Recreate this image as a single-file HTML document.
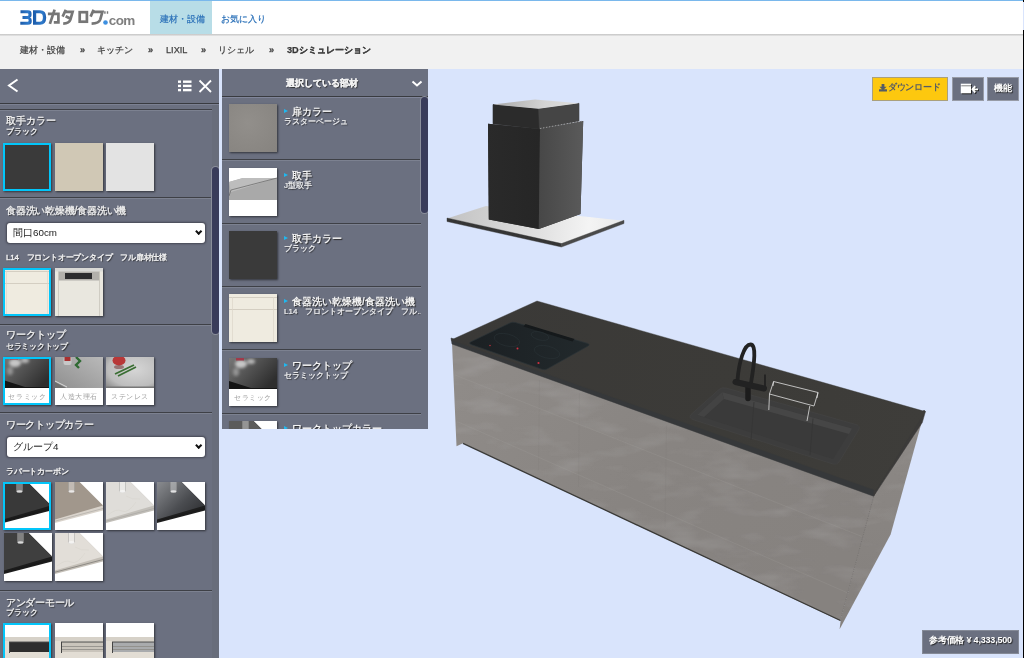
<!DOCTYPE html>
<html><head><meta charset="utf-8">
<style>
*{box-sizing:border-box;margin:0;padding:0}
html,body{width:1024px;height:658px;overflow:hidden}
#wrap{position:absolute;left:0;top:0;width:1024px;height:658px;will-change:transform}
body{position:relative;background:#d9e4fc;font-family:"Liberation Sans",sans-serif;color:#333}
.abs{position:absolute}
#topline{left:0;top:0;width:1023px;height:1px;background:#7ab8ec}
#header{left:0;top:1px;width:1023px;height:33px;background:#fff}
#hshadow{left:0;top:34px;width:1023px;height:2px;background:linear-gradient(#c4c4c4,#e6e6e6)}
#crumb{left:0;top:35px;width:1023px;height:34px;background:#f1f1f1}
.crumb{position:absolute;top:45px;font-size:9.2px;line-height:11px;color:#444;white-space:nowrap;-webkit-text-stroke:0.25px #444}
#rline{left:1023px;top:30px;width:1px;height:628px;background:#000}
#rline2{left:1023px;top:0;width:1px;height:2px;background:#000}
#tab{left:150px;top:1px;width:62px;height:33px;background:#b8dde7}
.nav{position:absolute;top:13.5px;font-size:8.5px;line-height:11px;color:#2a70b8;white-space:nowrap;-webkit-text-stroke:0.2px #2a70b8}
#lp{left:0;top:69px;width:219px;height:589px;background:#6b7080;overflow:hidden}
#lph{left:0;top:0;width:219px;height:35px;border-bottom:1px solid #393b40;box-shadow:0 1px 0 #7c8192}
#mp{left:222px;top:69px;width:206px;height:360px;background:#6b7080;overflow:hidden}
.sep{position:absolute;height:2px;background:linear-gradient(#3e4046 50%,#7c8190 50%)}
.t1{position:absolute;font-size:10px;line-height:12px;color:#f2f2f2;white-space:nowrap;text-shadow:1px 1px 1px #2a2a2a;-webkit-text-stroke:0.3px #f2f2f2}
.t2{position:absolute;font-size:8px;line-height:10px;color:#f2f2f2;white-space:nowrap;font-weight:bold;text-shadow:1px 1px 1px #2a2a2a}
.sw{position:absolute;width:48px;height:48px;box-shadow:1px 1px 2px rgba(0,0,0,.55);overflow:hidden}
.sel{box-shadow:0 0 0 0 transparent,1px 1px 2px rgba(0,0,0,.55)}
.sel:after{content:"";position:absolute;left:0;top:0;right:0;bottom:0;border:2.7px solid #02c6fa}
.select{position:absolute;left:7px;width:198px;height:19.5px;background:#fff;border-radius:3px;font-size:9.8px;line-height:19.5px;color:#222;padding-left:6px;box-shadow:0 0 2px 0.5px rgba(40,40,50,.55)}
.select:after{content:"";position:absolute;right:4px;top:5.5px;width:3.4px;height:3.4px;border-right:2.3px solid #111;border-bottom:2.3px solid #111;transform:rotate(45deg)}
.lbl{position:absolute;left:0;bottom:0;width:100%;height:17px;background:#fff;font-size:7.4px;line-height:17px;color:#a0a0a0;text-align:center;letter-spacing:0.6px;white-space:nowrap;overflow:hidden}
.scroll{position:absolute;width:7px;background:#393c5a;border-radius:4px;box-shadow:0 0 0 1px #8a8e9a}
.mi-t{position:absolute;left:70px;font-size:10px;line-height:12px;color:#f4f4f4;font-weight:bold;white-space:nowrap;text-shadow:1px 1px 1px #2a2a2a}
.mi-s{position:absolute;left:62px;width:137px;overflow:hidden;font-size:8px;line-height:10px;color:#f4f4f4;white-space:nowrap;text-shadow:1px 1px 1px #2a2a2a;-webkit-text-stroke:0.2px #f4f4f4}
.tri{position:absolute;left:62px;width:0;height:0;border-left:4px solid #1fb8f0;border-top:2.5px solid transparent;border-bottom:2.5px solid transparent}
.btn{position:absolute;top:77px;height:24px;font-size:10px;line-height:22px;text-align:center;white-space:nowrap;border:1px solid #9a9a9a}
</style></head><body><div id="wrap">
<div class="abs" id="topline"></div>
<div class="abs" id="header"></div>
<div class="abs" id="crumb"></div>
<div class="abs" id="hshadow"></div>
<div class="abs" id="tab"></div>
<div class="nav" style="left:160px">建材・設備</div>
<div class="nav" style="left:221px">お気に入り</div>
<svg class="abs" style="left:0;top:0" width="150" height="34" viewBox="0 0 150 34">
<defs><linearGradient id="lg3" x1="0" y1="0" x2="1" y2="0"><stop offset="0" stop-color="#1b5aa8"/><stop offset="0.7" stop-color="#2f7bcc"/><stop offset="1" stop-color="#1d5eae"/></linearGradient></defs>
<path d="M20.5,10.3 H28 Q31.5,10.3 31.5,13.5 V15.2 Q31.5,17.2 30,17.6 Q31.7,18 31.7,20.3 V21.5 Q31.7,24.7 28,24.7 H20.3 V21.8 H27.6 Q28.6,21.8 28.6,20.8 V20.2 Q28.6,19.1 27.6,19.1 H22.5 V16.1 H27.4 Q28.4,16.1 28.4,15.1 V14.3 Q28.4,13.2 27.4,13.2 H20.5 Z" fill="url(#lg3)"/>
<path d="M33,10.3 H40 Q46.2,10.3 46.2,17.5 Q46.2,24.7 40,24.7 H33 Z M36.2,13.3 V21.7 H39.6 Q42.9,21.7 42.9,17.5 Q42.9,13.3 39.6,13.3 Z" fill="url(#lg3)" fill-rule="evenodd"/>
<g fill="none" stroke="#767676" stroke-width="2.7" stroke-linejoin="miter">
<path d="M47.9,13.9 H58.4 V22.4 H53.8"/><path d="M54.6,9.7 L49.9,23.9"/>
<path d="M65.8,9.7 L62.6,16.6"/><path d="M64.3,11.9 H72.6 L70.4,19.6 Q69.2,23.3 63.2,23.6"/><path d="M65.6,16.2 L70.6,18.8"/>
<rect x="79.7" y="12.2" width="7.2" height="9.5"/>
<path d="M93.6,9.7 L90.6,16.6"/><path d="M92.2,11.9 H102.4 L100.2,19.6 Q99,23.3 91.6,23.6"/>
<path d="M104.9,11.2 V13.8 M107.5,11.2 V13.8" stroke-width="1.4"/>
</g>
<circle cx="105.5" cy="22.5" r="2.3" fill="#3d8fe0"/>
<text x="108.8" y="24.7" font-size="13.5" fill="#7f7f7f" font-weight="bold" letter-spacing="-0.6" style="font-family:'Liberation Sans',sans-serif">com</text>
</svg>
<div class="crumb" style="left:20px">建材・設備</div>
<div class="crumb" style="left:80px;font-weight:bold">»</div>
<div class="crumb" style="left:97px">キッチン</div>
<div class="crumb" style="left:148px;font-weight:bold">»</div>
<div class="crumb" style="left:166px">LIXIL</div>
<div class="crumb" style="left:201px;font-weight:bold">»</div>
<div class="crumb" style="left:218px">リシェル</div>
<div class="crumb" style="left:269px;font-weight:bold">»</div>
<div class="crumb" style="left:287px;font-weight:bold;color:#333">3Dシミュレーション</div>
<svg width="0" height="0" style="position:absolute"><defs><linearGradient id="s4g" x1="0" y1="0" x2="1" y2="0.8"><stop offset="0" stop-color="#8a8c90"/><stop offset="0.6" stop-color="#4a4c50"/><stop offset="1" stop-color="#2e2f32"/></linearGradient></defs></svg>
<div class="abs" id="lp">
<div class="abs" id="lph"></div>
<svg class="abs" style="left:0;top:0" width="219" height="34">
    <polyline points="17.5,10.5 9,16.5 17.5,22.5" fill="none" stroke="#fff" stroke-width="2"/>
    <rect x="178" y="11.5" width="3" height="2.4" fill="#fff"/><rect x="183" y="11.5" width="8.5" height="2.4" fill="#fff"/>
    <rect x="178" y="15.7" width="3" height="2.4" fill="#fff"/><rect x="183" y="15.7" width="8.5" height="2.4" fill="#fff"/>
    <rect x="178" y="19.9" width="3" height="2.4" fill="#fff"/><rect x="183" y="19.9" width="8.5" height="2.4" fill="#fff"/>
    <path d="M199.5,11.5 L211,23 M211,11.5 L199.5,23" stroke="#fff" stroke-width="1.8"/>
  </svg>
<div class="sep" style="left:0;top:40px;width:212px"></div>
<div class="t1" style="left:6px;top:46px;">取手カラー</div>
<div class="t2" style="left:6px;top:58px;">ブラック</div>
<div class="sw sel" style="left:3.4px;top:74px;background:#3a3a3a"></div>
<div class="sw" style="left:55px;top:74px;background:#d0c8b5"></div>
<div class="sw" style="left:106px;top:74px;background:#e3e3e3"></div>
<div class="sep" style="left:0;top:128px;width:212px"></div>
<div class="t1" style="left:6px;top:136px;letter-spacing:-0.2px">食器洗い乾燥機/食器洗い機</div>
<div class="select" style="top:154px">間口60cm</div>
<div class="t2" style="left:6px;top:184px;font-weight:normal;letter-spacing:-0.2px;-webkit-text-stroke:0.35px #f2f2f2">L14　フロントオープンタイプ　フル扉材仕様</div>
<div class="sw sel" style="left:3.4px;top:199px;background:#fff"><svg width="48" height="48" style="display:block"><rect width="48" height="48" fill="#efebe0"/><path d="M0,3.5 H48 M0,15.5 H48" stroke="#c9c2b5" stroke-width="0.7"/><path d="M3.5,3 V48 M44.5,3 V48" stroke="#ddd6c8" stroke-width="0.7"/></svg></div>
<div class="sw" style="left:55px;top:199px;background:#fff"><svg width="48" height="48" style="display:block"><rect width="48" height="48" fill="#e9e7df"/><rect width="48" height="3.5" fill="#d9d9d6"/><rect x="3.5" y="3.5" width="41" height="9" fill="#b2b0ab"/><rect x="10" y="5" width="27" height="6" fill="#2c2c2e"/><path d="M3.5,3.5 V48 M44.5,3.5 V48" stroke="#c8c5bb" stroke-width="0.8"/></svg></div>
<div class="sep" style="left:0;top:255px;width:212px"></div>
<div class="t1" style="left:6px;top:259.5px;">ワークトップ</div>
<div class="t2" style="left:6px;top:272.5px;letter-spacing:-0.3px">セラミックトップ</div>
<div class="sw sel" style="left:3.4px;top:288px;background:#fff"><svg width="48" height="31" viewBox="0 0 48 31" style="display:block"><defs><linearGradient id="cg" x1="0" y1="0" x2="1" y2="0.6"><stop offset="0" stop-color="#777"/><stop offset="0.45" stop-color="#555"/><stop offset="1" stop-color="#2e2e2e"/></linearGradient>
<filter id="cb"><feGaussianBlur stdDeviation="1.6"/></filter></defs>
<rect width="48" height="31" fill="url(#cg)"/>
<g filter="url(#cb)"><ellipse cx="12" cy="6" rx="6" ry="4" fill="#d8d8d8" opacity=".85"/><ellipse cx="22" cy="3.5" rx="4" ry="2.5" fill="#cfcfcf" opacity=".8"/><ellipse cx="7" cy="14" rx="3" ry="4" fill="#aaa" opacity=".7"/></g>
<rect x="7" y="0" width="8" height="2.5" fill="#a03a4a"/><polygon points="0,23 22,30 48,30 48,31 0,31" fill="#151515"/></svg><div class="lbl">セラミック</div></div>
<div class="sw" style="left:55px;top:288px;background:#fff"><svg width="48" height="31" viewBox="0 0 48 31" style="display:block"><defs><linearGradient id="mg" x1="0" y1="1" x2="1" y2="0"><stop offset="0" stop-color="#8f8f8f"/><stop offset="1" stop-color="#b9b9b9"/></linearGradient></defs><rect width="48" height="31" fill="url(#mg)"/>
<rect x="8.5" y="0" width="8" height="8" rx="2" fill="#d0d0d0" opacity=".8"/><rect x="9.5" y="0" width="6" height="4" fill="#a83030"/>
<path d="M21,0 L25,4 L21,8 L24,11" stroke="#2f6a33" stroke-width="2.4" fill="none"/><path d="M0,24 L12,30" stroke="#d8d8d8" stroke-width="1"/><polygon points="0,25 11,31 0,31" fill="#6e6e6e"/></svg><div class="lbl">人造大理石</div></div>
<div class="sw" style="left:106px;top:288px;background:#fff"><svg width="48" height="31" viewBox="0 0 48 31" style="display:block"><defs><radialGradient id="sg" cx="0.6" cy="0.4" r="0.8"><stop offset="0" stop-color="#d6d6d6"/><stop offset="0.7" stop-color="#bdbdbd"/><stop offset="1" stop-color="#8c8c8c"/></radialGradient></defs>
<rect width="48" height="31" fill="url(#sg)"/><ellipse cx="13" cy="3.5" rx="6.5" ry="5" fill="#b83838"/><ellipse cx="13" cy="10" rx="5" ry="2" fill="#7a4040" opacity=".6"/><path d="M9,17 L28,8 M12,19 L30,10" stroke="#3a6e33" stroke-width="1.8"/><rect x="0" y="29.5" width="48" height="1.5" fill="#777"/></svg><div class="lbl">ステンレス</div></div>
<div class="sep" style="left:0;top:343px;width:212px"></div>
<div class="t1" style="left:6px;top:349.5px;letter-spacing:-0.3px">ワークトップカラー</div>
<div class="select" style="top:368px">グループ4</div>
<div class="t2" style="left:6px;top:398px;font-weight:normal;letter-spacing:-0.2px;-webkit-text-stroke:0.35px #f2f2f2">ラパートカーボン</div>
<div class="sw sel" style="left:3.4px;top:413px;background:#fff"><svg width="48" height="48" viewBox="0 0 48 48" style="display:block"><rect width="48" height="48" fill="#fff"/>
<polygon points="0,0 24.5,0 48,23.5 48,28.5 0,41 " fill="#1c1c1c"/><polygon points="0,0 24.5,0 48,23.5 0,37.5" fill="#393939"/><path d="M0,39.2 L48,26.5" stroke="#111" stroke-width="0.6" opacity=".5"/>
<rect x="13.5" y="-1" width="6" height="11" rx="1.2" fill="rgba(255,255,255,.35)" stroke="rgba(150,150,150,.6)" stroke-width="0.7"/><ellipse cx="16.5" cy="9.5" rx="3" ry="1.2" fill="rgba(255,255,255,.7)"/></svg></div>
<div class="sw" style="left:55px;top:413px;background:#fff"><svg width="48" height="48" viewBox="0 0 48 48" style="display:block"><rect width="48" height="48" fill="#fff"/>
<polygon points="0,0 24.5,0 48,23.5 48,28.5 0,41 " fill="#d9d3cb"/><polygon points="0,0 24.5,0 48,23.5 0,37.5" fill="#a1978c"/><path d="M0,39.2 L48,26.5" stroke="#777" stroke-width="0.6" opacity=".5"/>
<rect x="13.5" y="-1" width="6" height="11" rx="1.2" fill="rgba(255,255,255,.35)" stroke="rgba(150,150,150,.6)" stroke-width="0.7"/><ellipse cx="16.5" cy="9.5" rx="3" ry="1.2" fill="rgba(255,255,255,.7)"/></svg></div>
<div class="sw" style="left:106px;top:413px;background:#fff"><svg width="48" height="48" viewBox="0 0 48 48" style="display:block"><rect width="48" height="48" fill="#fff"/>
<polygon points="0,0 24.5,0 48,23.5 48,28.5 0,41 " fill="#c2bfb9"/><polygon points="0,0 24.5,0 48,23.5 0,37.5" fill="#dfddd9"/><path d="M2,33 Q10,26 16,29 T30,20 M20,14 Q26,18 34,17" stroke="#d2cdc5" stroke-width="0.5" fill="none" opacity="0.7"/><path d="M0,39.2 L48,26.5" stroke="#888" stroke-width="0.6" opacity=".5"/>
<rect x="13.5" y="-1" width="6" height="11" rx="1.2" fill="rgba(255,255,255,.35)" stroke="rgba(150,150,150,.6)" stroke-width="0.7"/><ellipse cx="16.5" cy="9.5" rx="3" ry="1.2" fill="rgba(255,255,255,.7)"/></svg></div>
<div class="sw" style="left:157px;top:413px;background:#fff"><svg width="48" height="48" viewBox="0 0 48 48" style="display:block"><rect width="48" height="48" fill="#fff"/>
<polygon points="0,0 24.5,0 48,23.5 48,28.5 0,41 " fill="#1e1e1e"/><polygon points="0,0 24.5,0 48,23.5 0,37.5" fill="url(#s4g)"/><path d="M0,39.2 L48,26.5" stroke="#111" stroke-width="0.6" opacity=".5"/>
<rect x="13.5" y="-1" width="6" height="11" rx="1.2" fill="rgba(255,255,255,.35)" stroke="rgba(150,150,150,.6)" stroke-width="0.7"/><ellipse cx="16.5" cy="9.5" rx="3" ry="1.2" fill="rgba(255,255,255,.7)"/></svg></div>
<div class="sw" style="left:4px;top:464px;background:#fff"><svg width="48" height="48" viewBox="0 0 48 48" style="display:block"><rect width="48" height="48" fill="#fff"/>
<polygon points="0,0 24.5,0 48,23.5 48,28.5 0,41 " fill="#1c1c1c"/><polygon points="0,0 24.5,0 48,23.5 0,37.5" fill="#3f3f3f"/><path d="M0,39.2 L48,26.5" stroke="#111" stroke-width="0.6" opacity=".5"/>
<rect x="13.5" y="-1" width="6" height="11" rx="1.2" fill="rgba(255,255,255,.35)" stroke="rgba(150,150,150,.6)" stroke-width="0.7"/><ellipse cx="16.5" cy="9.5" rx="3" ry="1.2" fill="rgba(255,255,255,.7)"/></svg></div>
<div class="sw" style="left:55px;top:464px;background:#fff"><svg width="48" height="48" viewBox="0 0 48 48" style="display:block"><rect width="48" height="48" fill="#fff"/>
<polygon points="0,0 24.5,0 48,23.5 48,28.5 0,41 " fill="#c4bfb7"/><polygon points="0,0 24.5,0 48,23.5 0,37.5" fill="#e2ded8"/><path d="M2,33 Q10,26 16,29 T30,20 M20,14 Q26,18 34,17" stroke="#d2cdc5" stroke-width="0.5" fill="none" opacity="0.7"/><path d="M0,39.2 L48,26.5" stroke="#111" stroke-width="0.6" opacity=".5"/>
<rect x="13.5" y="-1" width="6" height="11" rx="1.2" fill="rgba(255,255,255,.35)" stroke="rgba(150,150,150,.6)" stroke-width="0.7"/><ellipse cx="16.5" cy="9.5" rx="3" ry="1.2" fill="rgba(255,255,255,.7)"/></svg></div>
<div class="sep" style="left:0;top:521px;width:212px"></div>
<div class="t1" style="left:6px;top:528px;letter-spacing:-0.3px">アンダーモール</div>
<div class="t2" style="left:6px;top:539px;">ブラック</div>
<div class="sw sel" style="left:3.4px;top:554px;background:#fff"><svg width="48" height="48" viewBox="0 0 48 48" style="display:block"><rect width="48" height="48" fill="#fff"/>
<rect x="0" y="14" width="48" height="34" fill="#e2ddd4"/><rect x="0" y="14" width="48" height="4" fill="#d6d1c8"/>
<rect x="6" y="19" width="42" height="10" fill="#2e2e2e"/><path d="M6,19 H48" stroke="#4a4a4a" stroke-width="1"/><path d="M6.5,19 V30" stroke="#444" stroke-width="1"/></svg></div>
<div class="sw" style="left:55px;top:554px;background:#fff"><svg width="48" height="48" viewBox="0 0 48 48" style="display:block"><rect width="48" height="48" fill="#fff"/>
<rect x="0" y="14" width="48" height="34" fill="#e2ddd4"/><rect x="0" y="14" width="48" height="4" fill="#d6d1c8"/>
<rect x="6" y="19" width="42" height="10" fill="#c9c4bb"/><path d="M7,23.5 H48 M7,26.5 H48" stroke="#8d8a85" stroke-width="0.8"/><path d="M6,19 H48" stroke="#4a4a4a" stroke-width="1"/><path d="M6.5,19 V30" stroke="#444" stroke-width="1"/></svg></div>
<div class="sw" style="left:106px;top:554px;background:#fff"><svg width="48" height="48" viewBox="0 0 48 48" style="display:block"><rect width="48" height="48" fill="#fff"/>
<rect x="0" y="14" width="48" height="34" fill="#e2ddd4"/><rect x="0" y="14" width="48" height="4" fill="#d6d1c8"/>
<rect x="6" y="19" width="42" height="10" fill="#a9abad"/><path d="M7,23.5 H48 M7,26.5 H48" stroke="#8d8a85" stroke-width="0.8"/><path d="M6,19 H48" stroke="#4a4a4a" stroke-width="1"/><path d="M6.5,19 V30" stroke="#444" stroke-width="1"/></svg></div>
<div class="abs" style="left:212px;top:36px;width:7px;height:553px;background:#686d7b"></div>
<div class="scroll" style="left:212px;top:98px;height:167px"></div>
</div>
<div class="abs" id="mp">
<div class="abs" style="left:0;top:0;width:206px;height:28px;border-bottom:1px solid #393b40;box-shadow:0 1px 0 #80859a"></div>
<div class="t1" style="left:64px;top:8px;font-weight:bold;font-size:9.4px">選択している部材</div>
<svg class="abs" style="left:0;top:0" width="206" height="27"><polyline points="190.5,12.5 195,16.5 199.5,12.5" fill="none" stroke="#fff" stroke-width="2"/></svg>
<div class="sw" style="left:7px;top:35.4px"><div style="width:48px;height:48px;background:radial-gradient(circle at 40% 40%,#928f8b,#86837f)"></div></div>
<div class="tri" style="top:40.4px"></div>
<div class="mi-t" style="top:37.4px">扉カラー</div>
<div class="mi-s" style="top:48.4px">ラスターベージュ</div>
<div class="sep" style="left:0;top:90.4px;width:199px"></div>
<div class="sw" style="left:7px;top:98.7px"><svg width="48" height="48" viewBox="0 0 48 48" style="display:block"><rect width="48" height="48" fill="#fff"/>
<polygon points="0,14 14,10 48,10 48,32 0,32" fill="#a9a9a9"/><polygon points="0,14 14,10 48,10 2,24" fill="#bdbdbd"/><path d="M0,28 L2,22 L48,10" stroke="#6d6d6d" stroke-width="0.8" fill="none"/></svg></div>
<div class="tri" style="top:103.7px"></div>
<div class="mi-t" style="top:100.7px">取手</div>
<div class="mi-s" style="top:111.7px">J型取手</div>
<div class="sep" style="left:0;top:153.7px;width:199px"></div>
<div class="sw" style="left:7px;top:162.0px"><div style="width:48px;height:48px;background:#3a3a3a"></div></div>
<div class="tri" style="top:167.0px"></div>
<div class="mi-t" style="top:164.0px">取手カラー</div>
<div class="mi-s" style="top:175.0px">ブラック</div>
<div class="sep" style="left:0;top:217.0px;width:199px"></div>
<div class="sw" style="left:7px;top:225.3px"><svg width="48" height="48" style="display:block"><rect width="48" height="48" fill="#efebe0"/><path d="M0,3.5 H48 M0,15.5 H48" stroke="#c9c2b5" stroke-width="0.7"/><path d="M3.5,3 V48 M44.5,3 V48" stroke="#ddd6c8" stroke-width="0.7"/></svg></div>
<div class="tri" style="top:230.3px"></div>
<div class="mi-t" style="top:227.3px">食器洗い乾燥機/食器洗い機</div>
<div class="mi-s" style="top:238.3px">L14　フロントオープンタイプ　フル…</div>
<div class="sep" style="left:0;top:280.3px;width:199px"></div>
<div class="sw" style="left:7px;top:288.6px"><svg width="48" height="31" viewBox="0 0 48 31" style="display:block"><defs><linearGradient id="c2g" x1="0" y1="0" x2="1" y2="0.6"><stop offset="0" stop-color="#777"/><stop offset="0.45" stop-color="#555"/><stop offset="1" stop-color="#2e2e2e"/></linearGradient>
<filter id="c2b"><feGaussianBlur stdDeviation="1.6"/></filter></defs>
<rect width="48" height="31" fill="url(#c2g)"/>
<g filter="url(#c2b)"><ellipse cx="12" cy="6" rx="6" ry="4" fill="#d8d8d8" opacity=".85"/><ellipse cx="22" cy="3.5" rx="4" ry="2.5" fill="#cfcfcf" opacity=".8"/><ellipse cx="7" cy="14" rx="3" ry="4" fill="#aaa" opacity=".7"/></g>
<rect x="7" y="0" width="8" height="2.5" fill="#a03a4a"/><polygon points="0,23 22,30 48,30 48,31 0,31" fill="#151515"/></svg><div class="lbl">セラミック</div></div>
<div class="tri" style="top:293.6px"></div>
<div class="mi-t" style="top:290.6px">ワークトップ</div>
<div class="mi-s" style="top:301.6px">セラミックトップ</div>
<div class="sep" style="left:0;top:343.6px;width:199px"></div>
<div class="sw" style="left:7px;top:351.9px"><svg width="48" height="48" viewBox="0 0 48 48" style="display:block"><rect width="48" height="48" fill="#fff"/>
<polygon points="0,0 24.5,0 48,23.5 48,28.5 0,41 " fill="#1e1e1e"/><polygon points="0,0 24.5,0 48,23.5 0,37.5" fill="#5b5b5b"/><path d="M0,39.2 L48,26.5" stroke="#111" stroke-width="0.6" opacity=".5"/>
<rect x="13.5" y="-1" width="6" height="11" rx="1.2" fill="rgba(255,255,255,.35)" stroke="rgba(150,150,150,.6)" stroke-width="0.7"/><ellipse cx="16.5" cy="9.5" rx="3" ry="1.2" fill="rgba(255,255,255,.7)"/></svg></div>
<div class="tri" style="top:356.9px"></div>
<div class="mi-t" style="top:353.9px">ワークトップカラー</div>
<div class="mi-s" style="top:364.9px"></div>
<div class="sep" style="left:0;top:406.9px;width:199px"></div>
<div class="scroll" style="left:199px;top:28px;height:116px"></div>
</div>
<svg class="abs" style="left:0;top:0" width="1024" height="658" viewBox="0 0 1024 658">
<defs>
 <linearGradient id="gtop" x1="451" y1="340" x2="925" y2="411" gradientUnits="userSpaceOnUse">
  <stop offset="0" stop-color="#3a3937"/><stop offset="0.6" stop-color="#3c3b38"/><stop offset="1" stop-color="#3e3d3a"/>
 </linearGradient>
 <linearGradient id="gfront" x1="500" y1="340" x2="800" y2="600" gradientUnits="userSpaceOnUse">
  <stop offset="0" stop-color="#8f8b88"/><stop offset="0.5" stop-color="#888481"/><stop offset="1" stop-color="#86827f"/>
 </linearGradient>
 <linearGradient id="gright" x1="880" y1="430" x2="880" y2="620" gradientUnits="userSpaceOnUse">
  <stop offset="0" stop-color="#8c8885"/><stop offset="1" stop-color="#84807d"/>
 </linearGradient>
 <linearGradient id="ghoodL" x1="488" y1="0" x2="539" y2="0" gradientUnits="userSpaceOnUse">
  <stop offset="0" stop-color="#2a2a2a"/><stop offset="1" stop-color="#262626"/>
 </linearGradient>
 <linearGradient id="ghoodR" x1="539" y1="0" x2="583" y2="0" gradientUnits="userSpaceOnUse">
  <stop offset="0" stop-color="#474747"/><stop offset="1" stop-color="#5a5a5a"/>
 </linearGradient>
 <linearGradient id="gplate" x1="447" y1="215" x2="624" y2="230" gradientUnits="userSpaceOnUse">
  <stop offset="0" stop-color="#c2c2c2"/><stop offset="0.55" stop-color="#e2e2e2"/><stop offset="0.8" stop-color="#f4f4f4"/><stop offset="1" stop-color="#e8e8e8"/>
 </linearGradient>
 <linearGradient id="ghtop" x1="493" y1="100" x2="579" y2="105" gradientUnits="userSpaceOnUse">
  <stop offset="0" stop-color="#a8a8a8"/><stop offset="0.6" stop-color="#d4d4d4"/><stop offset="1" stop-color="#dedede"/>
 </linearGradient>
 <linearGradient id="gsink" x1="700" y1="390" x2="850" y2="460" gradientUnits="userSpaceOnUse">
  <stop offset="0" stop-color="#3a3a3a"/><stop offset="1" stop-color="#363636"/>
 </linearGradient>
 <filter id="noise" x="0" y="0" width="100%" height="100%" filterUnits="userSpaceOnUse">
  <feTurbulence type="fractalNoise" baseFrequency="0.02 0.06" numOctaves="3" seed="7" result="t"/>
  <feColorMatrix type="matrix" values="0 0 0 0 0.55  0 0 0 0 0.55  0 0 0 0 0.56  1.6 0 0 0 -0.75" />
 </filter>
 <clipPath id="cfront"><polygon points="452,343 875,495 840.5,621 463,443.3 456.5,446.2"/><polygon points="874.5,494 922.3,420 890.6,534.5 839.6,629.3 841,618"/></clipPath>
</defs>
<!-- range hood -->
<g stroke-linejoin="round">
<polygon points="447,218.5 486,206 624,220.8 561.5,244" fill="url(#gplate)"/>
<path d="M449,219 L561.5,243 L622,221.5" stroke="#f4f4f4" stroke-width="0.8" fill="none" opacity="0.8"/>
<polygon points="447,218 561.5,243.5 561.5,247 447,221.5" fill="#353535" stroke="#353535" stroke-width="0.4"/>
<polygon points="561.5,243.5 624,220.3 624,223.5 561.5,247" fill="#4a4a4a" stroke="#4a4a4a" stroke-width="0.4"/>
<polygon points="488,123.8 540,129 583.2,121 580.5,214 538.8,229 488.8,219.6" fill="#333"/>
<polygon points="488,123.8 540,129 538.8,229 488.8,219.6" fill="url(#ghoodL)"/>
<polygon points="540,129 583.2,121 580.5,214 538.8,229" fill="url(#ghoodR)"/>
<polygon points="493,104.6 538.6,108.7 579,103.3 579,121 539.5,129 493,123.8" fill="#333"/>
<polygon points="493,104.6 538.6,108.7 539.5,129 493,123.8" fill="#2b2b2b" stroke="#2b2b2b" stroke-width="0.6"/>
<polygon points="538.6,108.7 579,103.3 579,121 539.5,129" fill="#454545" stroke="#454545" stroke-width="0.6"/>
<polygon points="493,104.6 535,99.4 579,103.3 538.6,108.7" fill="url(#ghtop)"/>
<path d="M540,128.5 L582,121" stroke="#bdbdbd" stroke-width="0.7" stroke-dasharray="1.5,1.5" fill="none"/>
</g>
<!-- island -->
<polygon points="874.5,494 922.3,420 890.6,534.5 839.6,629.3 841,618" fill="url(#gright)"/>
<polygon points="452,343 875,495 840.5,621 463,443.3 456.5,446.2" fill="url(#gfront)"/>
<rect x="440" y="330" width="500" height="310" filter="url(#noise)" clip-path="url(#cfront)" opacity="0.3"/>
<g stroke="#7e7c79" stroke-width="0.6" fill="none" opacity="0.3">
 <path d="M539.5,380 L538.5,470 M579.5,393 L578.5,487 M666.5,425 L665,527" stroke="#6f6d6a" opacity="0.6"/>
 <path d="M455,375 L862,536.5" stroke="#a9a7a4"/>
 <path d="M457,421.5 L849,593.5" stroke="#a9a7a4"/>
 
</g>
<path d="M873.5,497 L841,618" stroke="#6e6c69" stroke-width="0.6" stroke-dasharray="1.2,1.2" fill="none"/>
<polyline points="463,443.3 840.5,620.5" fill="none" stroke="#3a3a38" stroke-width="1.3"/>
<polygon points="451,338 878,488 873.6,496.2 452,344" fill="#36383a" stroke="#36383a" stroke-width="0.5"/>
<polygon points="874,489 924,410 925.4,411.6 922.3,422.5 873.6,496.2" fill="#3c3b3a" stroke="#3c3b3a" stroke-width="0.5"/>
<polygon points="451,340 537,301 925.4,411.6 876,490.6" fill="url(#gtop)" stroke="#3b3a38" stroke-width="0.4"/>
<!-- cooktop -->
<defs><linearGradient id="gcook" x1="470" y1="340" x2="590" y2="345" gradientUnits="userSpaceOnUse"><stop offset="0" stop-color="#1b2023"/><stop offset="1" stop-color="#22292c"/></linearGradient></defs>
<path d="M470.5,342 L510,323 Q512.5,321.8 515.5,322.6 L587.5,343.4 Q590.5,344.5 588,346 L547,369 Q545,370 542,369.3 L471,344.5 Q468.5,343.2 470.5,342 Z" fill="url(#gcook)" stroke="#2a3236" stroke-width="0.7"/>
<polygon points="525.5,324 574.5,339 572.5,341.6 523.5,326.6" fill="#15191b"/>
<g fill="none" stroke="#2a3337" stroke-width="0.5"><ellipse cx="507" cy="340" rx="13" ry="6" transform="rotate(14 507 340)"/><ellipse cx="547" cy="352" rx="13" ry="6" transform="rotate(14 547 352)"/><ellipse cx="540" cy="336" rx="9" ry="4" transform="rotate(14 540 336)"/></g>
<circle cx="490" cy="345.5" r="0.8" fill="#b03038"/><circle cx="517.5" cy="348.5" r="1" fill="#d03040"/><circle cx="538.5" cy="363" r="1.1" fill="#d03040"/>
<!-- sink -->
<path d="M691,414.5 L719,389.5 Q722,387 726,388 L856,424.5 Q861,426 858.5,430 L839,462 Q837,465 833,464 L694,420 Q688,418 691,414.5 Z" fill="#3d3d3d" stroke="#444" stroke-width="0.6"/>
<path d="M697,415 L722,392 L852,428.5 L833,459 Z" fill="#3a3a3a"/>
<path d="M722,392 L852,428.5 L849,434 L724,399 Z" fill="#464646"/>
<path d="M697,415 L722,392 L724,399 L704,417 Z" fill="#434343"/>
<path d="M754,402 L751,440 M813,418.5 L810,455" stroke="#363636" stroke-width="0.9"/>
<!-- faucet -->
<path d="M748,398.5 L748,388" stroke="#1c1c1c" stroke-width="5.5" stroke-linecap="round"/>
<path d="M735.5,382 L764,388.5" stroke="#222" stroke-width="6" stroke-linecap="round"/>
<path d="M737.5,380 C739,362 744,344.5 750.5,344.5 C756.5,344.5 754.5,362 751,383" fill="none" stroke="#222" stroke-width="3.8"/>
<path d="M765,374.5 L765,386.5" stroke="#222" stroke-width="1.8"/>
<!-- rack -->
<g fill="none" stroke="#e0e0e0" stroke-width="0.8">
<path d="M773.6,381.5 L818,392.5 L814,406 L769.5,394 Z M769.5,394 L768.8,410 M809.8,406 L807,421 M773.6,381.5 L773,386 M818,392.5 L817,398"/>
</g>
</svg>

<div class="abs" style="left:872px;top:76.5px;width:76px;height:24px;background:#fdc80f;border:1px solid #aaa07c"></div>
<svg class="abs" style="left:872px;top:76px" width="20" height="25"><path d="M9.6,8 H12.4 V10.8 H14.6 L11,14.2 L7.4,10.8 H9.6 Z" fill="#545b66"/><rect x="7" y="13.2" width="8" height="2.4" rx="0.4" fill="#545b66"/></svg>
<div class="abs" style="left:888px;top:82px;font-size:9px;line-height:11px;color:#555b66;white-space:nowrap;font-weight:bold;letter-spacing:-0.3px">ダウンロード</div>
<div class="abs" style="left:951.5px;top:76.5px;width:32px;height:24px;background:#6b7080;border:1px solid #979ba6"></div>
<svg class="abs" style="left:951.5px;top:76.5px" width="32" height="24" style="overflow:visible"><g fill="#fff" style="filter:drop-shadow(1px 1px 0.5px #222)"><rect x="8.8" y="6.7" width="10.2" height="1.9"/><rect x="8.8" y="9.2" width="10.2" height="7.1"/><path d="M19.2,12.2 L22.6,8.6 L24,10 L22.5,11.5 H26 V13.3 H22.5 L24,14.8 L22.6,16.2 Z"/></g></svg>
<div class="abs" style="left:987px;top:76.5px;width:32px;height:24px;background:#6b7080;border:1px solid #979ba6"></div>
<div class="abs" style="left:994px;top:82.5px;font-size:9px;line-height:11px;color:#fff;white-space:nowrap;font-weight:bold;text-shadow:1px 1px 1px #222">機能</div>
<div class="abs" style="left:922px;top:629.5px;width:97px;height:24px;background:#6b7080;border:1px solid #858a97"></div>
<div class="abs" style="left:929px;top:635px;font-size:9px;line-height:11px;color:#fff;white-space:nowrap;font-weight:bold;text-shadow:1px 1px 1px #222;letter-spacing:-0.2px">参考価格 ¥ 4,333,500</div>
<div class="abs" id="rline"></div>
<div class="abs" id="rline2"></div>
</div></body></html>
